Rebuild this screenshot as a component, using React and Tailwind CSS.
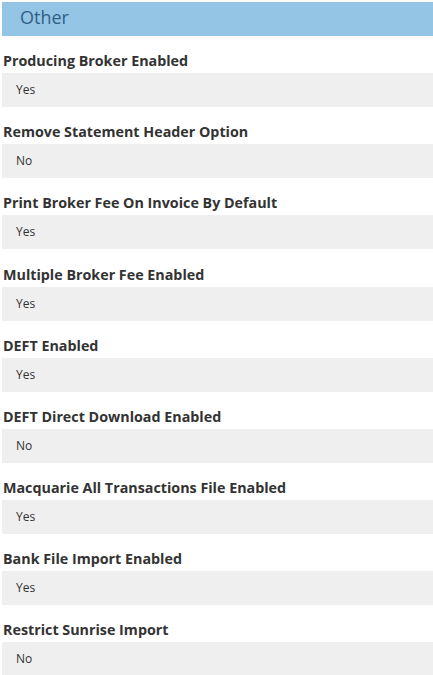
const rows = [
  ["Producing Broker Enabled", "Yes"],
  ["Remove Statement Header Option", "No"],
  ["Print Broker Fee On Invoice By Default", "Yes"],
  ["Multiple Broker Fee Enabled", "Yes"],
  ["DEFT Enabled", "Yes"],
  ["DEFT Direct Download Enabled", "No"],
  ["Macquarie All Transactions File Enabled", "Yes"],
  ["Bank File Import Enabled", "Yes"],
  ["Restrict Sunrise Import", "No"],
];

export default function App() {
  return (
    <div className="min-h-screen bg-white pl-[2px] pt-[2px] font-['Open_Sans',sans-serif]">
      {/* Section header */}
      <div className="h-[34px] bg-[#95c5e5] pl-[18px] pt-[3px] text-[18px] leading-[24px] text-[#2f5f87]">
        Other
      </div>

      {rows.map(([label, value]) => (
        <div key={label}>
          <div className="pl-[1px] pt-[15.125px] pb-[2px] text-[14.3px] leading-[20px] font-bold text-[#333333]">
            {label}
          </div>
          <div className="h-[34px] bg-[#efefef] pl-[14px] text-[12px] leading-[34px] text-[#333333]">
            {value}
          </div>
        </div>
      ))}
    </div>
  );
}
